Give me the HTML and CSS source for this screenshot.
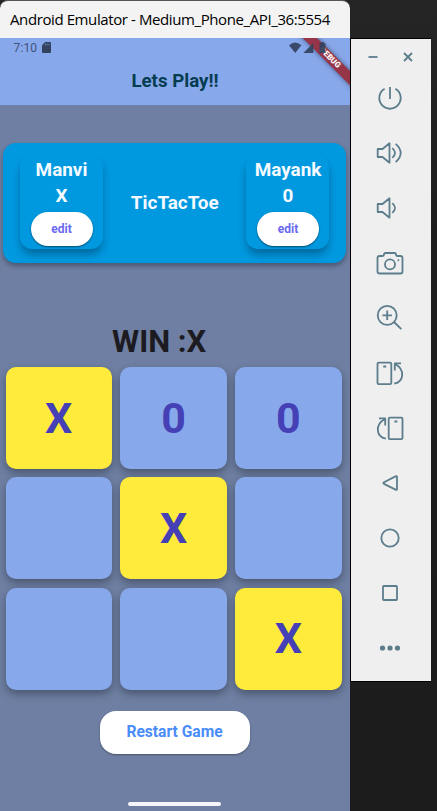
FILE: index.html
```
<!DOCTYPE html>
<html lang="en">
<head>
<meta charset="utf-8">
<title>Android Emulator</title>
<link rel="stylesheet" href="styles.css">
</head>
<body>
<main class="window">
  <header class="titlebar"><span>Android Emulator - Medium_Phone_API_36:5554</span></header>
  <section class="screen">
    <div class="appbar">
      <div class="status">
        <span class="clock">7:10</span>
        <svg class="sd" width="9" height="11" viewBox="0 0 9 11"><path d="M3.2 0H8q1 0 1 1v9q0 1-1 1H1q-1 0-1-1V3.3z" fill="#33435f"/><path d="M3.4 1.5v2M5.2 1.5v2M7 1.5v2" stroke="#6e8ac0" stroke-width=".8"/></svg>
        <svg class="signals" width="38" height="12" viewBox="0 0 38 12" fill="#33435f"><path d="M0 3.2Q6.2-2 12.4 3.2L6.2 11z"/><path d="M14.3 11L24.3 1V11z"/><path d="M30.5 1.2H32V0h3v1.2h1.5V11h-6z"/></svg>
      </div>
      <h1>Lets Play!!</h1>
      <div class="ribbon"><span>DEBUG</span></div>
    </div>
    <div class="scorecard">
      <div class="player"><b>Manvi</b><b>X</b><button>edit</button></div>
      <h2>TicTacToe</h2>
      <div class="player"><b>Mayank</b><b>0</b><button>edit</button></div>
    </div>
    <p class="result">WIN :X</p>
    <div class="board">
      <div class="cell win">X</div><div class="cell">0</div><div class="cell">0</div>
      <div class="cell"></div><div class="cell win">X</div><div class="cell"></div>
      <div class="cell"></div><div class="cell"></div><div class="cell win">X</div>
    </div>
    <button class="restart">Restart Game</button>
    <div class="homebar"></div>
  </section>
</main>
<aside class="toolbar">
  <div class="controls">
    <svg width="10" height="10" viewBox="0 0 10 10"><path d="M.5 5h9"/></svg>
    <svg width="10" height="10" viewBox="0 0 10 10"><path d="M1 1l8 8M9 1l-8 8"/></svg>
  </div>
  <div class="tool"><svg viewBox="0 0 28 28"><path d="M14 3v12M8.6 4.8a10.7 10.7 0 1 0 10.8 0"/></svg></div>
  <div class="tool"><svg viewBox="0 0 28 28"><path d="M1.7 10H6.5L13.5 4.3V23.7L6.5 18H1.7zM16.3 9.2q5.4 4.8 0 9.6M19.7 4.8q10 9.2 0 18.4"/></svg></div>
  <div class="tool"><svg viewBox="0 0 28 28"><path d="M1.7 10H6.5L13.5 4.3V23.7L6.5 18H1.7zM16.3 9.2q5.4 4.8 0 9.6"/></svg></div>
  <div class="tool"><svg viewBox="0 0 28 28"><path d="M3.5 7H6.5Q8 7 8 5.5T9.5 4H18.5Q20 4 20 5.5T21.5 7H24.5Q26.5 7 26.5 9V22.5Q26.5 24.5 24.5 24.5H3.5Q1.5 24.5 1.5 22.5V9Q1.5 7 3.5 7z"/><circle cx="14" cy="15.4" r="5"/><path d="M21.6 11.2h1.6"/></svg></div>
  <div class="tool"><svg viewBox="0 0 28 28"><circle cx="11.2" cy="11.3" r="9.5"/><path d="M11.2 6.6v9.4M6.5 11.3h9.4M18 18l7.3 7.2"/></svg></div>
  <div class="tool"><svg viewBox="0 0 28 28"><rect x="1.5" y="3.6" width="13.8" height="21.5" rx="1.2"/><path d="M7.2 7.5h3M18.2 24.7C28.2 22.5 29.2 10.5 19 5M18.8 11.5V4.3H25"/></svg></div>
  <div class="tool"><svg viewBox="0 0 28 28"><rect x="12.7" y="3.6" width="13.8" height="21.5" rx="1.2"/><path d="M18.4 7.5h3M9.8 24.7C-.2 22.5-1.2 10.5 9 5M9.2 11.5V4.3H3"/></svg></div>
  <div class="tool"><svg viewBox="0 0 28 28"><path d="M19.5 7.4Q21 6.6 21 8V20Q21 21.4 19.5 20.6L8 14.9Q6.7 14 8 13.2z"/></svg></div>
  <div class="tool"><svg viewBox="0 0 28 28"><circle cx="14" cy="14" r="8.7"/></svg></div>
  <div class="tool"><svg viewBox="0 0 28 28"><rect x="7" y="7" width="14" height="14" rx=".8"/></svg></div>
  <div class="tool"><svg class="dots" viewBox="0 0 28 28"><circle cx="6.5" cy="14" r="2.6"/><circle cx="14" cy="14" r="2.6"/><circle cx="21.5" cy="14" r="2.6"/></svg></div>
</aside>
</body>
</html>
```
FILE: styles.css
```
* { box-sizing: border-box; }
body {
  margin: 0;
  width: 437px;
  height: 811px;
  overflow: hidden;
  display: flex;
  background: linear-gradient(#252525, #1d1d1d 30%, #1c1c1c);
  font-family: Roboto, sans-serif;
}
h1, h2, p { margin: 0; }
button { border: 0; background: #fff; font-family: inherit; font-weight: 700; padding: 0; }
svg { display: block; }

.window { width: 350px; height: 811px; flex: none; }
.titlebar {
  height: 38px;
  padding: 0 10px;
  border-top: 1px solid #555;
  border-radius: 8px 8px 0 0;
  background: #f3f3f3;
  color: #000;
  font: 15px/37px "Open Sans", sans-serif;
  white-space: nowrap;
}
.titlebar span { display: inline-block; letter-spacing: -.4px; }

.screen {
  height: 773px;
  display: flex;
  flex-direction: column;
  background: #6e7fa3;
}
.appbar {
  position: relative;
  height: 67px;
  flex: none;
  overflow: hidden;
  background: #88a8ec;
}
.status { position: relative; z-index: 1; height: 19px; padding: 0 7px 0 13.5px; display: flex; align-items: center; color: #40537a; }
.clock { font-size: 12px; letter-spacing: .15px; width: 28.5px; }
.signals { margin-left: auto; margin-right: 16px; opacity: .92; }
.appbar h1 {
  font-size: 18.7px;
  line-height: 22px;
  margin-top: 13px;
  text-align: center;
  color: #043c50;
}
.ribbon {
  position: absolute;
  right: -35px;
  top: 15px;
  width: 110px;
  height: 9.6px;
  transform: rotate(45deg);
  background: #963448;
  box-shadow: 0 0 5px rgba(0, 0, 0, .5);
  color: #fff;
  font-size: 8px;
  font-weight: 900;
  line-height: 9.6px;
  text-align: center;
}

.scorecard {
  width: 343px;
  height: 120px;
  flex: none;
  margin: 38px 0 0 3px;
  padding: 12px 16.5px 14px 17px;
  display: flex;
  justify-content: space-between;
  border-radius: 13px;
  background: #0099e0;
  box-shadow: 0 3px 5px rgba(0, 0, 0, .32);
  color: #f4faff;
}
.scorecard h2 { font-size: 18.9px; line-height: 22px; align-self: center; padding-top: 1px; }
.player {
  width: 83px;
  display: flex;
  flex-direction: column;
  align-items: center;
  border-radius: 12px;
  background: #0099e0;
  box-shadow: 0 6px 8px -1px rgba(0, 30, 60, .42);
  font-size: 18.9px;
  line-height: 26px;
  padding-top: 2px;
}
.player button {
  width: 62px;
  height: 34px;
  flex: none;
  margin-top: 3px;
  border-radius: 17px;
  box-shadow: 0 1px 2px rgba(0, 0, 0, .5);
  color: #6868f0;
  font-size: 12px;
}

.result {
  margin: 60px 0 0 112px;
  font-size: 31px;
  line-height: 38px;
  font-weight: 700;
  color: #1c1b22;
}
.board {
  margin: 6px 8px 0 5.5px;
  display: grid;
  grid-template-columns: repeat(3, 106.3px);
  grid-auto-rows: 102px;
  gap: 8.4px 8.6px;
}
.cell {
  display: flex;
  align-items: center;
  justify-content: center;
  padding-bottom: 1px;
  border-radius: 10px;
  background: #88a8ec;
  box-shadow: 0 4px 8px rgba(0, 0, 0, .32);
  color: #4540b5;
  font-size: 43px;
  font-weight: 700;
}
.win { background: #ffeb3b; }
.restart {
  width: 150px;
  height: 43px;
  flex: none;
  margin: 21px 0 0 99.5px;
  border-radius: 16px;
  box-shadow: 0 1px 2px rgba(0, 0, 0, .35);
  color: #4a8cfa;
  font-size: 15.6px;
}
.homebar {
  width: 93px;
  height: 4px;
  margin: auto 0 5px 128px;
  border-radius: 2px;
  background: #f5f6f9;
}

.toolbar {
  width: 81px;
  height: 644px;
  flex: none;
  margin-top: 38px;
  border: solid #000;
  border-width: 1px 0 1px 1px;
  background: #efefef;
}
.toolbar svg { fill: none; stroke: #5c7d8c; stroke-width: 1.8; stroke-linejoin: round; }
.controls { height: 31px; padding: 4px 18px 0 17px; display: flex; justify-content: space-between; align-items: center; }
.tool { height: 55px; display: flex; align-items: center; justify-content: center; padding-right: 2px; }
.tool svg { width: 28px; height: 28px; }
.toolbar .dots { fill: #5c7d8c; stroke: none; }
```
